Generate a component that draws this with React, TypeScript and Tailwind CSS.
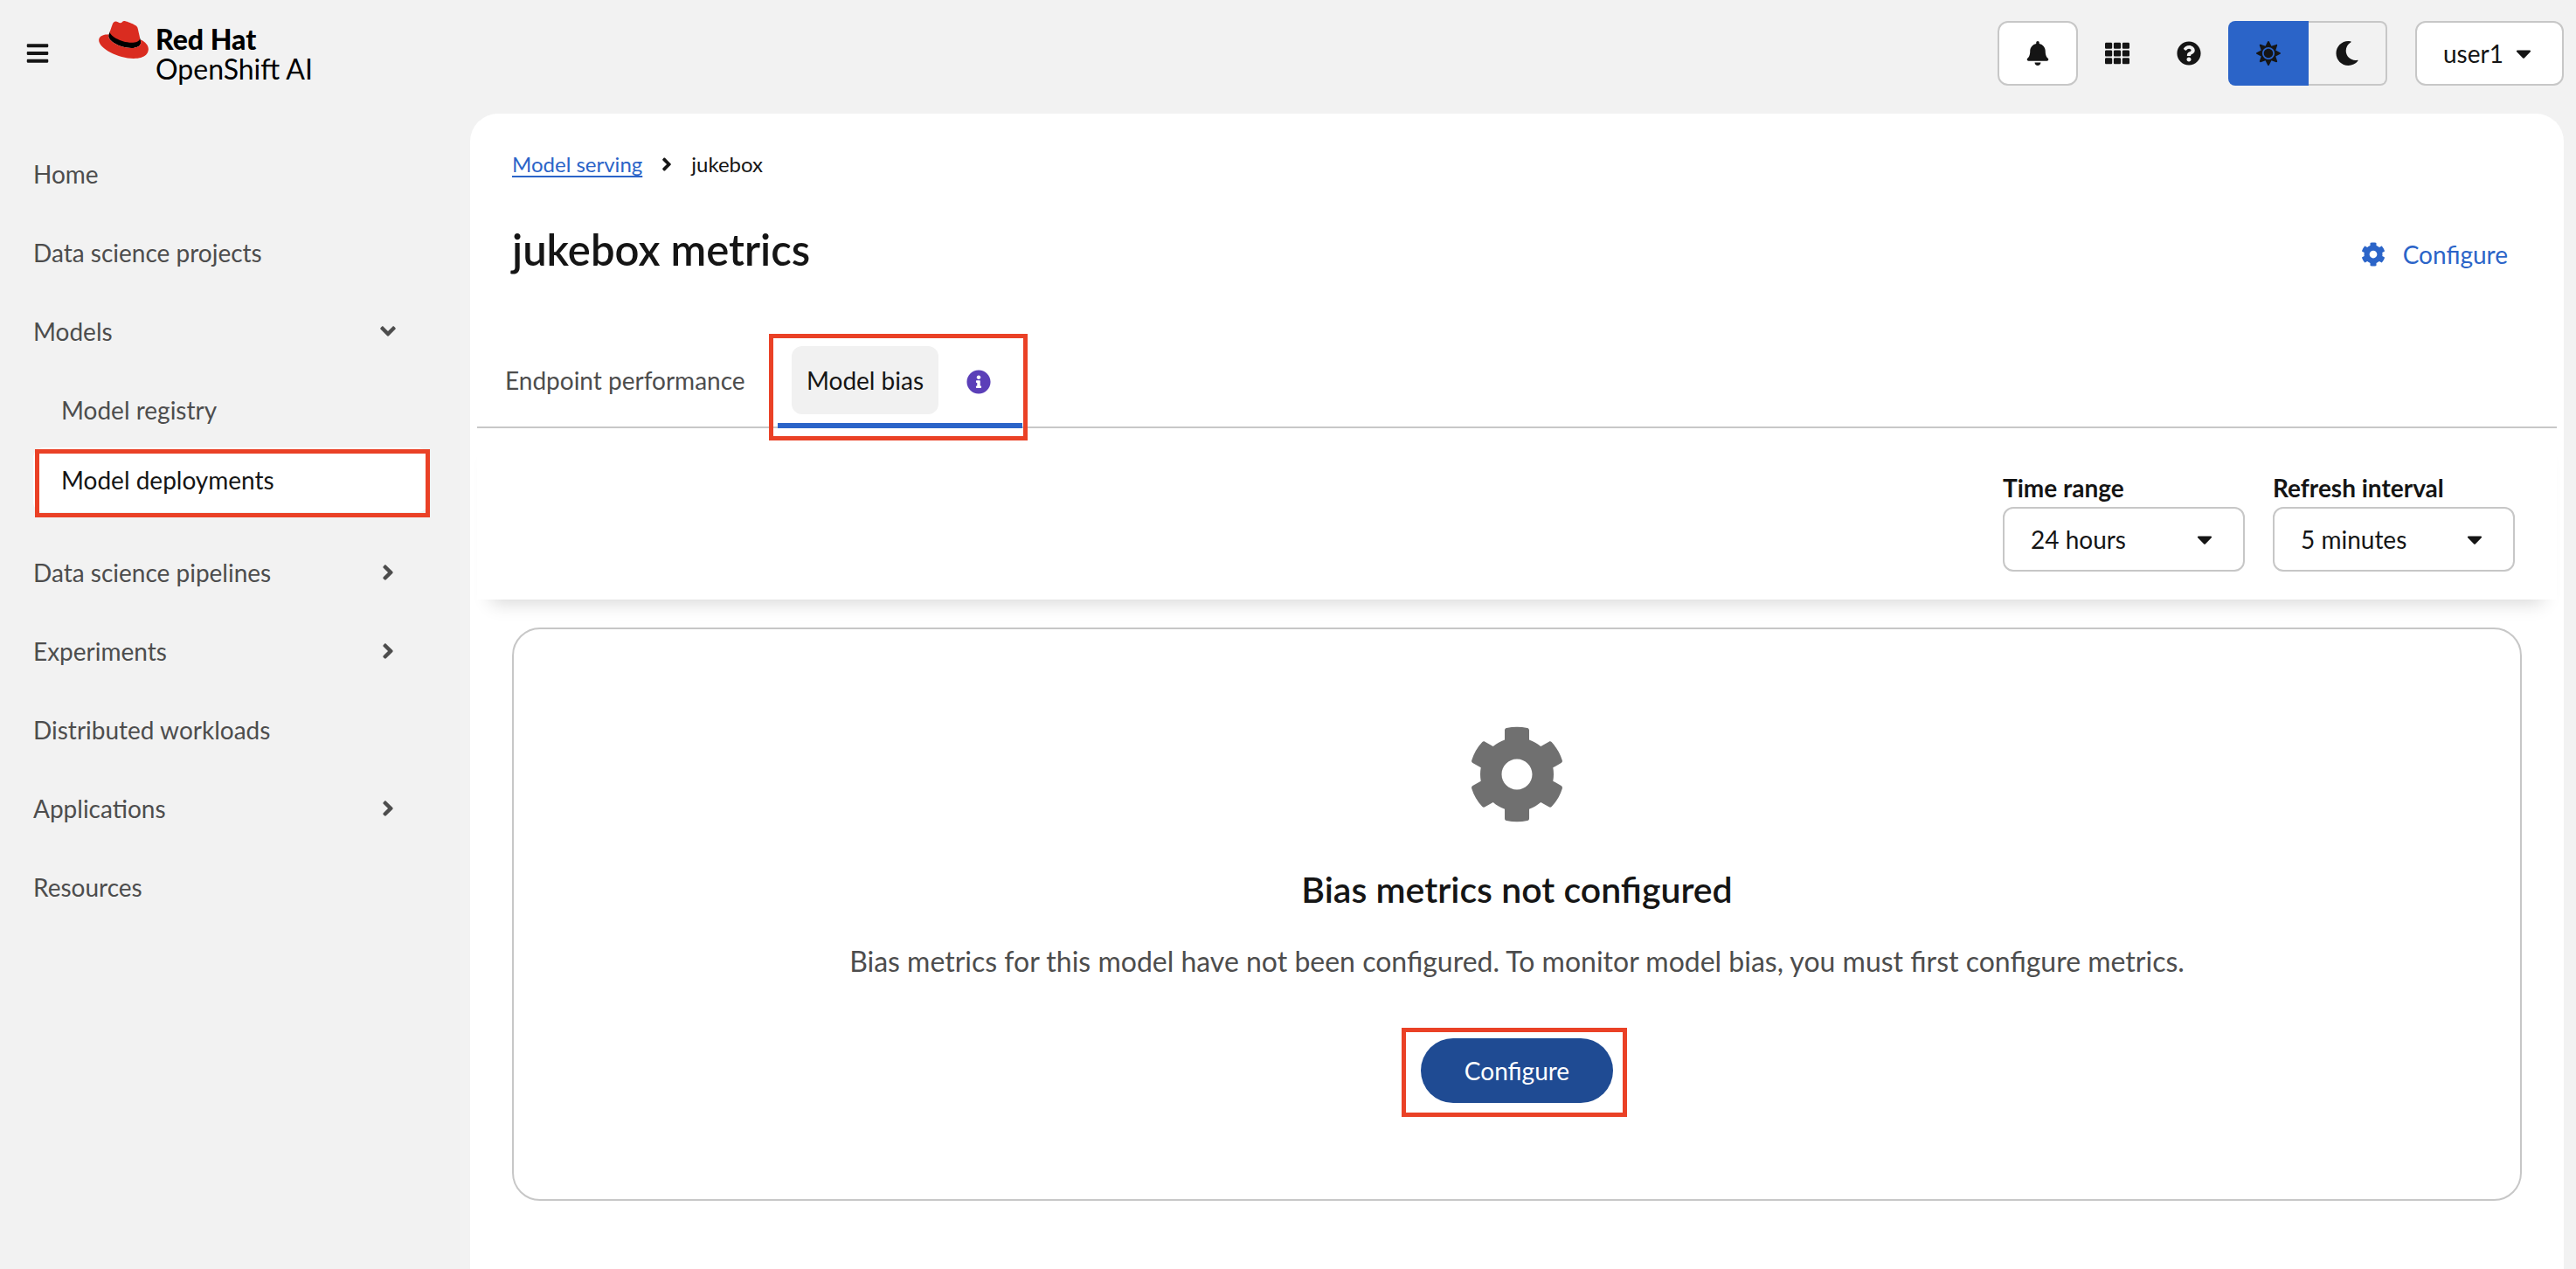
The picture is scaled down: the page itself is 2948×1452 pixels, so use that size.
import type { ReactNode } from 'react';
import {
  FaAngleDown,
  FaAngleRight,
  FaBars,
  FaBell,
  FaCaretDown,
  FaCog,
  FaInfoCircle,
  FaMoon,
  FaQuestionCircle,
  FaSun,
  FaTh,
} from 'react-icons/fa';

function RedHatMark() {
  return (
    <svg viewBox="0 62 512 388" className="h-[43px] w-[57px]" aria-hidden="true">
      <path
        fill="#000000"
        d="M423.86 238.56L429 254.84c4.65 22 4.65 24.35 4.65 27.25 0 37.66-42.33 58.56-98 58.56-125.74.08-235.91-73.65-235.91-122.33a49.55 49.55 0 0 1 4.06-19.72L113.05 174l150 20z"
      />
      <path
        fill="#da2c20"
        d="M341.52 285.56c33.65 0 82.34-6.94 82.34-47 .22-6.74.86-1.82-20.88-96.24-4.62-19.15-8.68-27.84-42.31-44.65-26.09-13.34-82.92-35.37-99.73-35.37-15.66 0-20.2 20.17-38.87 20.17-18 0-31.31-15.06-48.12-15.06-16.14 0-26.66 11-34.78 33.62-27.5 77.55-26.28 74.27-26.12 78.27 0 24.8 97.64 106.11 228.47 106.11M429 254.84c4.65 22 4.65 24.35 4.65 27.25 0 37.66-42.33 58.56-98 58.56-125.74.08-235.91-73.65-235.91-122.33a49.55 49.55 0 0 1 4.06-19.72C58.56 200.86 0 208.93 0 260.63c0 84.67 200.63 189 359.49 189 121.79 0 152.51-55.08 152.51-98.58 0-34.21-29.59-73.05-82.93-96.24"
      />
    </svg>
  );
}

function Header() {
  return (
    <header className="flex items-start justify-between pt-6 pr-3.5 pb-8 pl-[29px]">
      <div className="flex items-start">
        <button type="button" aria-label="Global navigation" className="flex h-[74px] items-center">
          <FaBars className="size-7" />
        </button>
        <a href="#home" className="ml-14 flex items-start gap-2 text-[32px] leading-[34px] text-black">
          <RedHatMark />
          <span className="flex flex-col pt-1">
            <span className="font-black">Red Hat</span>
            <span>OpenShift AI</span>
          </span>
        </a>
      </div>
      <div className="flex items-center">
        <button
          type="button"
          aria-label="Notifications"
          className="flex h-[74px] w-[92px] items-center justify-center rounded-xl border-2 border-[#c7c7c7] bg-white"
        >
          <FaBell className="size-7" />
        </button>
        <button type="button" aria-label="Applications" className="ml-[31px]">
          <FaTh className="size-7" />
        </button>
        <button type="button" aria-label="Help" className="ml-[54px]">
          <FaQuestionCircle className="size-7" />
        </button>
        <div className="ml-[31px] flex">
          <button
            type="button"
            aria-label="Light theme"
            aria-pressed="true"
            className="flex h-[74px] w-[92px] items-center justify-center rounded-l-lg bg-[#2b64c8]"
          >
            <FaSun className="size-7" />
          </button>
          <button
            type="button"
            aria-label="Dark theme"
            aria-pressed="false"
            className="flex h-[74px] w-[90px] items-center justify-center rounded-r-lg border-2 border-l-0 border-[#c7c7c7]"
          >
            <FaMoon className="size-7" />
          </button>
        </div>
        <button
          type="button"
          className="ml-8 flex h-[74px] w-[170px] items-center justify-between rounded-xl border-2 border-[#c7c7c7] bg-white px-[30px]"
        >
          user1
          <FaCaretDown className="size-7" />
        </button>
      </div>
    </header>
  );
}

function NavLink({ children }: { children: ReactNode }) {
  return (
    <a href="#nav" className="flex h-[74px] items-center">
      {children}
    </a>
  );
}

function NavGroup({ label, open = false }: { label: string; open?: boolean }) {
  return (
    <button
      type="button"
      aria-expanded={open}
      className="flex h-[74px] w-full items-center justify-between pr-8"
    >
      {label}
      {open ? <FaAngleDown className="size-7" /> : <FaAngleRight className="size-7" />}
    </button>
  );
}

function Sidebar() {
  return (
    <nav aria-label="Global" className="w-[538px] shrink-0 pt-8 pr-12 pl-[38px] text-[#4d4d4d]">
      <ul className="flex flex-col gap-4">
        <li>
          <NavLink>Home</NavLink>
        </li>
        <li>
          <NavLink>Data science projects</NavLink>
        </li>
        <li>
          <NavGroup label="Models" open />
          <ul className="mt-4 mb-4 flex flex-col gap-1.5">
            <li className="pl-8">
              <NavLink>Model registry</NavLink>
            </li>
            <li className="relative">
              <a
                href="#deployments"
                aria-current="page"
                className="flex h-[74px] items-center rounded-xl bg-white pl-8 text-[#151515]"
              >
                Model deployments
              </a>
              <span className="pointer-events-none absolute top-0.5 -right-0.5 -bottom-1.5 left-0.5 border-5 border-[#ea4126]" />
            </li>
          </ul>
        </li>
        <li>
          <NavGroup label="Data science pipelines" />
        </li>
        <li>
          <NavGroup label="Experiments" />
        </li>
        <li>
          <NavLink>Distributed workloads</NavLink>
        </li>
        <li>
          <NavGroup label="Applications" />
        </li>
        <li>
          <NavLink>Resources</NavLink>
        </li>
      </ul>
    </nav>
  );
}

function SelectField({ id, label, options }: { id: string; label: string; options: string[] }) {
  return (
    <div className="flex w-[277px] flex-col gap-1">
      <label htmlFor={id} className="leading-9 font-bold">
        {label}
      </label>
      <div className="relative">
        <select
          id={id}
          className="h-[74px] w-full appearance-none rounded-xl border-2 border-[#c7c7c7] bg-white pr-14 pl-[30px]"
        >
          {options.map((option) => (
            <option key={option}>{option}</option>
          ))}
        </select>
        <FaCaretDown className="pointer-events-none absolute top-[23px] right-8 size-7" />
      </div>
    </div>
  );
}

function Tabs() {
  return (
    <div role="tablist" className="mx-2 mt-[68px] flex border-b-2 border-[#c7c7c7]">
      <button
        type="button"
        role="tab"
        aria-selected="false"
        className="flex min-w-[344px] px-4 text-[#4d4d4d]"
      >
        <span className="flex h-[78px] items-center px-4">Endpoint performance</span>
      </button>
      <div className="relative -mb-0.5 flex items-start border-b-6 border-[#2b64c8] pr-9 pb-2.5 pl-4">
        <button
          type="button"
          role="tab"
          aria-selected="true"
          className="flex h-[78px] min-w-[168px] items-center justify-center rounded-xl bg-[#f1f1f1] px-4"
        >
          Model bias
        </button>
        <button
          type="button"
          aria-label="More information about model bias"
          className="ml-8 flex h-[78px] items-center pt-1 text-[#5b3fb8]"
        >
          <FaInfoCircle className="size-7" />
        </button>
        <span className="pointer-events-none absolute -top-3.5 -right-1.5 -bottom-5 -left-2.5 border-5 border-[#ea4126]" />
      </div>
    </div>
  );
}

function EmptyState() {
  return (
    <section className="mx-12 mt-8 flex flex-col items-center rounded-[32px] border-2 border-[#c7c7c7] px-8 py-[110px] text-center">
      <FaCog className="size-28 text-[#707070]" />
      <h2 className="mt-[50px] text-[41px] leading-[52px] font-semibold">
        Bias metrics not configured
      </h2>
      <p className="mt-8 text-[32px] leading-12 text-[#4d4d4d]">
        Bias metrics for this model have not been configured. To monitor model bias, you must first
        configure metrics.
      </p>
      <div className="relative mt-16">
        <button
          type="button"
          className="h-[74px] min-w-[220px] rounded-full bg-[#1f4b93] px-12 text-white"
        >
          Configure
        </button>
        <span className="pointer-events-none absolute -top-3 -right-4 -bottom-4 -left-[22px] border-5 border-[#ea4126]" />
      </div>
    </section>
  );
}

export default function App() {
  return (
    <div className="flex min-h-screen flex-col bg-[#f2f2f2] font-['Lato',sans-serif] text-[28px] leading-[42px] text-[#151515]">
      <Header />
      <div className="flex flex-1">
        <Sidebar />
        <main className="mr-3.5 min-w-0 flex-1 rounded-t-[32px] bg-white pt-10">
          <nav
            aria-label="Breadcrumb"
            className="flex items-center gap-4 px-12 text-[24px] leading-9"
          >
            <a href="#serving" className="text-[#2b64c8] underline underline-offset-4">
              Model serving
            </a>
            <FaAngleRight className="size-6" />
            <span>jukebox</span>
          </nav>
          <div className="mt-12 flex items-start justify-between pr-16 pl-12">
            <h1 className="text-[49px] leading-[62px] font-semibold">jukebox metrics</h1>
            <button type="button" className="flex h-[74px] items-center gap-5 text-[#2b64c8]">
              <FaCog className="size-7" />
              Configure
            </button>
          </div>
          <Tabs />
          <div className="mx-2 flex justify-end gap-8 pt-[50px] pr-12 pb-8 shadow-[0_20px_20px_-16px_rgba(0,0,0,0.16)]">
            <SelectField
              id="time-range"
              label="Time range"
              options={['24 hours', '1 hour', '7 days', '30 days']}
            />
            <SelectField
              id="refresh-interval"
              label="Refresh interval"
              options={['5 minutes', '15 seconds', '1 minute', '1 hour']}
            />
          </div>
          <EmptyState />
        </main>
      </div>
    </div>
  );
}
